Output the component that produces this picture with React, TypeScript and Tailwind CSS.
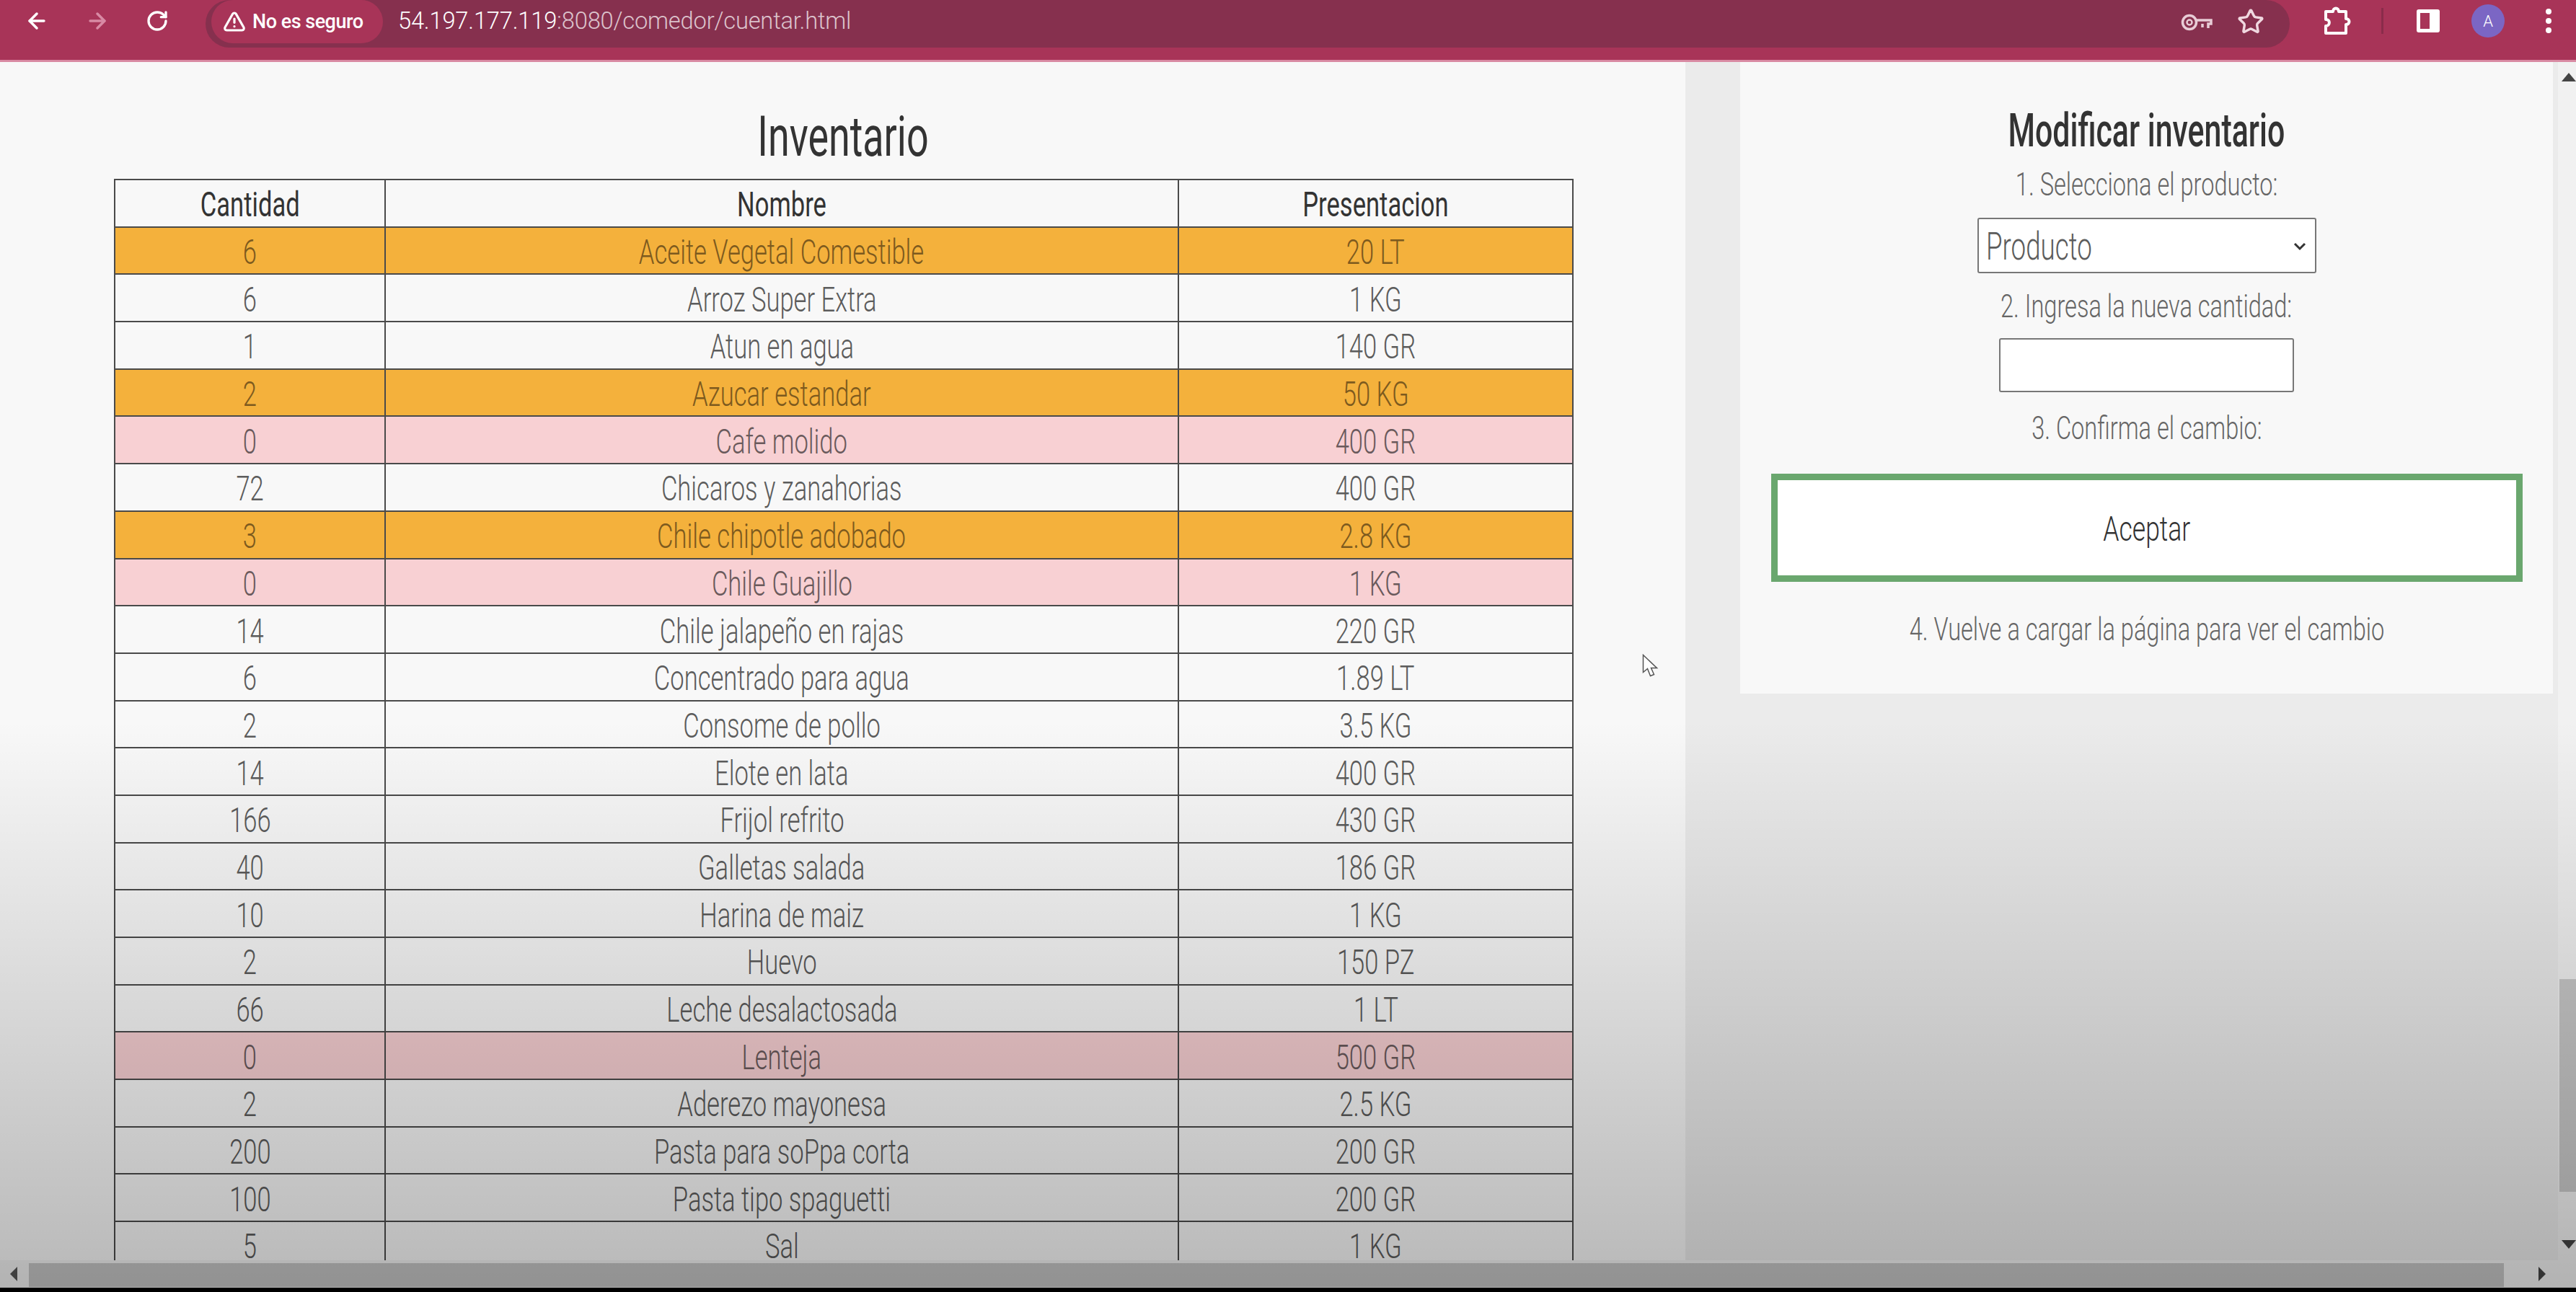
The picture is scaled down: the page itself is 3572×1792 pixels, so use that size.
import type { ReactNode } from "react";
import { ArrowLeft, ArrowRight, RotateCw, Star, TriangleAlert } from "lucide-react";

type Tone = "plain" | "low" | "out";

const rows: [number, string, string, Tone][] = [
  [6, "Aceite Vegetal Comestible", "20 LT", "low"],
  [6, "Arroz Super Extra", "1 KG", "plain"],
  [1, "Atun en agua", "140 GR", "plain"],
  [2, "Azucar estandar", "50 KG", "low"],
  [0, "Cafe molido", "400 GR", "out"],
  [72, "Chicaros y zanahorias", "400 GR", "plain"],
  [3, "Chile chipotle adobado", "2.8 KG", "low"],
  [0, "Chile Guajillo", "1 KG", "out"],
  [14, "Chile jalapeño en rajas", "220 GR", "plain"],
  [6, "Concentrado para agua", "1.89 LT", "plain"],
  [2, "Consome de pollo", "3.5 KG", "plain"],
  [14, "Elote en lata", "400 GR", "plain"],
  [166, "Frijol refrito", "430 GR", "plain"],
  [40, "Galletas salada", "186 GR", "plain"],
  [10, "Harina de maiz", "1 KG", "plain"],
  [2, "Huevo", "150 PZ", "plain"],
  [66, "Leche desalactosada", "1 LT", "plain"],
  [0, "Lenteja", "500 GR", "out"],
  [2, "Aderezo mayonesa", "2.5 KG", "plain"],
  [200, "Pasta para soPpa corta", "200 GR", "plain"],
  [100, "Pasta tipo spaguetti", "200 GR", "plain"],
  [5, "Sal", "1 KG", "plain"],
];

const toneClass: Record<Tone, string> = {
  plain: "bg-[#f8f8f8] text-[#5c5c5c]",
  low: "bg-[#f4b13c] text-[#7d5a1e]",
  out: "bg-[#f8d0d3] text-[#6a5a5c]",
};

const cellClass = "border-2 border-[#4a4a4a] p-0 pt-[5px] text-center align-middle";

// the page font is a condensed one that isn't installed, so squeeze Roboto
const Narrow = ({ children }: { children: ReactNode }) => (
  <span className="inline-block scale-x-[0.72] whitespace-nowrap">{children}</span>
);

const Step = ({ children }: { children: ReactNode }) => (
  <span className="inline-block scale-x-[0.74] whitespace-nowrap">{children}</span>
);

const BrowserBar = () => (
  <div className="flex h-[86px] shrink-0 items-start border-b-[3px] border-[#d98aa3] bg-[#a83458] font-['Roboto',sans-serif] text-white">
    <div className="flex h-[58px] w-[285px] shrink-0 items-center gap-[50px] pl-[34px]">
      <ArrowLeft size={34} strokeWidth={2.5} />
      <ArrowRight size={34} strokeWidth={2.5} className="text-[#d88aa4]" />
      <RotateCw size={32} strokeWidth={2.5} />
    </div>
    <div className="flex h-[66px] w-[2890px] shrink-0 items-start rounded-[33px] bg-[#86304e]">
      <div className="ml-[8px] flex h-[60px] w-[238px] items-center gap-[9px] rounded-[30px] bg-[#a83458] pl-[16px] text-[27px] font-medium tracking-[-0.5px]">
        <TriangleAlert size={32} strokeWidth={2.4} />
        <span>No es seguro</span>
      </div>
      <div className="ml-[21px] flex h-[60px] flex-1 items-center text-[32.7px] tracking-[-0.2px] text-[#dcc3cc]">
        <span className="text-white">54.197.177.119</span>:8080/comedor/cuentar.html
      </div>
      <svg width="44" height="24" viewBox="0 0 44 24" fill="none" stroke="#e8ccd6" strokeWidth="3.5" className="mt-[19px] mr-[34px]">
        <circle cx="12" cy="12" r="9.5" />
        <circle cx="12" cy="12" r="3.5" strokeWidth="2.5" />
        <path d="M21 9h21v5h-4v6M30 14v5" />
      </svg>
      <Star size={38} strokeWidth={2.2} className="mt-[11px] mr-[35px] text-[#f0d8e0]" />
    </div>
    <div className="flex h-[58px] flex-1 items-center">
      <svg width="42" height="42" viewBox="0 0 42 42" fill="none" stroke="white" strokeWidth="4" strokeLinejoin="round" className="ml-[45px]">
        <path d="M5 8h10c0-6 8-6 8 0h10v10c6 0 6 8 0 8v12H5V28c6 0 7-9 0-9z" />
      </svg>
      <div className="ml-[40px] h-[36px] w-[3px] bg-[#8a2c4a]" />
      <svg width="36" height="36" viewBox="0 0 36 36" className="ml-[44px]">
        <rect x="2" y="2" width="32" height="32" rx="3" fill="white" />
        <rect x="7" y="7" width="13" height="22" fill="#a83458" />
      </svg>
      <div className="ml-[42px] flex size-[46px] items-center justify-center rounded-full bg-[#7b66c4] text-[22px] text-white">
        A
      </div>
      <div className="ml-[57px] flex flex-col gap-[5px]">
        <span className="size-[8px] rounded-full bg-white" />
        <span className="size-[8px] rounded-full bg-white" />
        <span className="size-[8px] rounded-full bg-white" />
      </div>
    </div>
  </div>
);

const InventoryTable = () => (
  <table className="w-[2022px] table-fixed border-collapse text-[48px] leading-none">
    <colgroup>
      <col className="w-[375px]" />
      <col className="w-[1100px]" />
      <col className="w-[547px]" />
    </colgroup>
    <thead>
      <tr className="h-[65.7px] bg-[#f8f8f8] text-[#333]">
        <th className={`${cellClass} font-normal`}><Narrow>Cantidad</Narrow></th>
        <th className={`${cellClass} font-normal`}><Narrow>Nombre</Narrow></th>
        <th className={`${cellClass} font-normal`}><Narrow>Presentacion</Narrow></th>
      </tr>
    </thead>
    <tbody>
      {rows.map(([qty, name, unit, tone]) => (
        <tr key={name} className={`h-[65.7px] ${toneClass[tone]}`}>
          <td className={cellClass}><Narrow>{qty}</Narrow></td>
          <td className={cellClass}><Narrow>{name}</Narrow></td>
          <td className={cellClass}><Narrow>{unit}</Narrow></td>
        </tr>
      ))}
    </tbody>
  </table>
);

const EditPanel = () => (
  <div className="flex h-[876px] w-[1127px] shrink-0 flex-col items-center bg-[#f8f8f8] text-[44px] leading-none text-[#666]">
    <h2 className="mt-[64px] scale-x-[0.67] text-[64px] leading-none font-medium whitespace-nowrap text-[#333]">Modificar inventario</h2>
    <p className="mt-[20px]"><Step>1. Selecciona el producto:</Step></p>
    <div className="mt-[24px] flex h-[77px] w-[470px] items-center justify-between rounded-[3px] border-2 border-[#777] bg-white pt-[3px] pr-[12px] pl-[10px] text-[54px] text-[#5c5c5c]">
      <span className="origin-left scale-x-[0.68]">Producto</span>
      <svg width="18" height="12" viewBox="0 0 18 12" fill="none" stroke="#333" strokeWidth="3">
        <path d="M2 2l7 7 7-7" />
      </svg>
    </div>
    <p className="mt-[24px]"><Step>2. Ingresa la nueva cantidad:</Step></p>
    <input className="mt-[22px] h-[75px] w-[409px] rounded-[3px] border-2 border-[#777] bg-white" />
    <p className="mt-[28px]"><Step>3. Confirma el cambio:</Step></p>
    <button className="mt-[41px] flex h-[150px] w-[1042px] items-center justify-center border-[9px] border-[#6aa76e] bg-white pt-[4px] text-[48px] text-[#333]">
      <span className="scale-x-[0.74]">Aceptar</span>
    </button>
    <p className="mt-[44px]"><Step>4. Vuelve a cargar la página para ver el cambio</Step></p>
  </div>
);

const App = () => (
  <div className="relative flex h-[1792px] w-[3572px] flex-col overflow-hidden bg-black font-['Roboto','Liberation_Sans',sans-serif] font-light">
    <BrowserBar />
    <div className="flex min-h-0 flex-1 bg-[#ebebeb]">
      <main className="h-full w-[2337px] shrink-0 overflow-hidden bg-[#f8f8f8] pl-[158px]">
        <div className="w-[2022px]">
          <h1 className="mt-[66px] mb-[20px] scale-x-[0.69] text-center text-[78px] leading-[76px] font-normal text-[#333]">Inventario</h1>
          <InventoryTable />
        </div>
      </main>
      <div className="ml-[76px]">
        <EditPanel />
      </div>
      {/* vertical scrollbar */}
      <div className="relative ml-[7px] flex-1 bg-[#f1f1f1]">
        <div className="ml-[2px] mt-[1272px] h-[295px] bg-[#c9c9c9]" />
      </div>
    </div>
    {/* horizontal scrollbar */}
    <div className="h-[44px] shrink-0 border-b-[6px] border-black bg-[#f1f1f1] pt-[4px]">
      <div className="ml-[40px] h-[33px] w-[3432px] bg-[#c5c5c5]" />
    </div>

    {/* scrollbar arrows */}
    <span className="absolute top-[101px] right-[0px] size-0 border-x-[10px] border-b-[12px] border-x-transparent border-b-[#444]" />
    <span className="absolute top-[1720px] right-[0px] size-0 border-x-[10px] border-t-[12px] border-x-transparent border-t-[#444]" />
    <span className="absolute top-[1757px] left-[14px] size-0 border-y-[10px] border-r-[10px] border-y-transparent border-r-[#555]" />
    <span className="absolute top-[1757px] left-[3520px] size-0 border-y-[10px] border-l-[10px] border-y-transparent border-l-[#444]" />

    {/* mouse pointer */}
    <svg width="24" height="34" viewBox="0 0 24 34" className="absolute top-[907px] left-[2277px]">
      <path d="M1.5 1.5v24l6-5 4 10 5-2-4-9h8z" fill="white" stroke="#555" strokeWidth="1.5" />
    </svg>

    {/* video gradient on top of the page */}
    <div className="pointer-events-none absolute top-[1000px] left-0 h-[792px] w-full bg-linear-to-b from-black/0 to-black/26" />
  </div>
);

export default App;
